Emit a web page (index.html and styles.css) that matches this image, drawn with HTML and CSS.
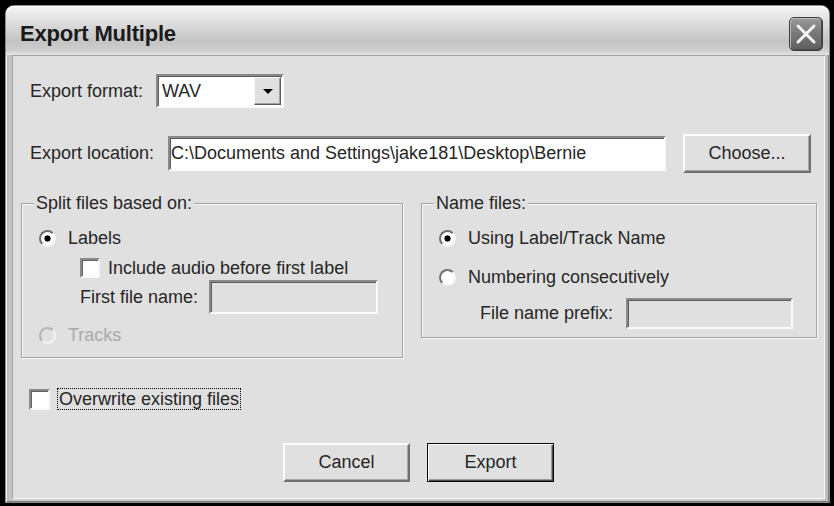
FILE: index.html
```html
<!DOCTYPE html>
<html lang="en">
<head>
  <meta charset="UTF-8">
  <meta name="viewport" content="width=device-width, initial-scale=1.0">
  <title>Export Multiple</title>
  <link rel="stylesheet" href="styles.css">
</head>
<body>
  <div class="window">
    <div class="titlebar">
      <span class="title">Export Multiple</span>
      <button class="close-btn" title="Close">
        <svg width="22" height="22" viewBox="0 0 22 22">
          <path d="M3 3 L19 19 M19 3 L3 19" stroke="#f4f4f4" stroke-width="3" stroke-linecap="round"/>
        </svg>
      </button>
    </div>

    <div class="content">
      <div class="row row-format">
        <label class="row-label format-label">Export format:</label>
        <div class="combo">
          <span class="combo-value">WAV</span>
          <span class="combo-btn"><span class="arrow"></span></span>
        </div>
      </div>

      <div class="row row-location">
        <label class="row-label location-label">Export location:</label>
        <input class="field location-field" type="text" value="C:\Documents and Settings\jake181\Desktop\Bernie">
        <button class="btn choose-btn">Choose...</button>
      </div>

      <div class="groups">
        <fieldset class="group split-group">
          <legend>Split files based on:</legend>
          <div class="opt opt-first">
            <input class="radio" type="radio" name="split" checked>
            <span>Labels</span>
          </div>
          <div class="opt opt-sub opt-check">
            <input class="check" type="checkbox">
            <span>Include audio before first label</span>
          </div>
          <div class="opt opt-sub opt-name">
            <span class="sub-label first-label">First file name:</span>
            <input class="field small-field first-field" type="text" disabled>
          </div>
          <div class="opt opt-tracks disabled">
            <input class="radio" type="radio" name="split" disabled>
            <span>Tracks</span>
          </div>
        </fieldset>

        <fieldset class="group name-group">
          <legend>Name files:</legend>
          <div class="opt opt-first">
            <input class="radio" type="radio" name="naming" checked>
            <span>Using Label/Track Name</span>
          </div>
          <div class="opt opt-numbering">
            <input class="radio" type="radio" name="naming">
            <span>Numbering consecutively</span>
          </div>
          <div class="opt opt-sub opt-prefix">
            <span class="sub-label prefix-label">File name prefix:</span>
            <input class="field small-field prefix-field" type="text" disabled>
          </div>
        </fieldset>
      </div>

      <div class="row row-overwrite">
        <input class="check" type="checkbox">
        <span class="focus-label">Overwrite existing files</span>
      </div>

      <div class="row row-buttons">
        <button class="btn">Cancel</button>
        <button class="btn btn-default">Export</button>
      </div>
    </div>
  </div>
</body>
</html>
```

FILE: styles.css
```css
body {
  margin: 0;
  background: #000;
  font-family: "Liberation Sans", Arial, sans-serif;
  font-size: 18px;
  color: #262626;
}

/* window frame */
.window {
  box-sizing: border-box;
  width: 825px;
  height: 498px;
  margin: 5px 4px 0 5px;
  padding: 0 4px 3px 6px;
  display: flex;
  flex-direction: column;
  background: linear-gradient(90deg, #b8b8b8, #cfcfcf 1%, #cfcfcf 99%, #b8b8b8);
  border: 1px solid #8e8e8e;
  border-radius: 9px 9px 0 0;
  box-shadow: inset 1px 0 #f2f2f2, inset -1px -1px #7a7a7a;
}

.titlebar {
  height: 49px;
  margin: 0 -4px 0 -6px;
  padding: 6px 6px 0 14px;
  box-sizing: border-box;
  display: flex;
  align-items: center;
  justify-content: space-between;
  border-radius: 8px 8px 0 0;
  background: linear-gradient(#f6f6f6 0%, #e6e6e6 22%, #d2d2d2 50%, #c4c4c4 72%, #cdcdcd 90%, #e4e4e4 100%);
  box-shadow: inset 0 1px #ffffff;
}

.title {
  font-size: 22px;
  font-weight: bold;
  color: #1a1a1a;
  line-height: 26px;
  letter-spacing: -0.2px;
}

.close-btn {
  width: 34px;
  height: 34px;
  padding: 0;
  display: flex;
  align-items: center;
  justify-content: center;
  border: 1px solid #3c3c3c;
  border-radius: 5px;
  background: linear-gradient(#9a9a9a, #7a7a7a 45%, #5e5e5e);
  box-shadow: inset 1px 1px #bdbdbd, inset -1px -1px #4a4a4a;
  cursor: pointer;
}

/* dialog body */
.content {
  flex: 1;
  display: flex;
  flex-direction: column;
  background: #e0e0e0;
  box-shadow: inset 1px 1px #a2a2a2, inset -1px -1px #f6f6f6;
}

.row {
  display: flex;
  align-items: center;
  padding-left: 18px;
}

.row-format {
  margin-top: 19px;
  height: 34px;
}

.format-label {
  width: 126px;
}

.location-label {
  width: 138px;
}

.combo {
  box-sizing: border-box;
  width: 128px;
  height: 34px;
  display: flex;
  align-items: center;
  padding: 1px 1px 1px 4px;
  background: #fff;
  border: 2px solid;
  border-color: #8a8a8a #fafafa #fafafa #8a8a8a;
  box-shadow: inset 1px 1px #5c5c5c;
}

.combo-value {
  flex: 1;
}

.combo-btn {
  box-sizing: border-box;
  width: 27px;
  height: 28px;
  display: flex;
  align-items: center;
  justify-content: center;
  background: #e0e0e0;
  border: 1px solid;
  border-color: #f8f8f8 #5a5a5a #5a5a5a #f8f8f8;
  box-shadow: inset -1px -1px #a0a0a0;
}

.arrow {
  width: 0;
  height: 0;
  border-left: 5px solid transparent;
  border-right: 5px solid transparent;
  border-top: 5px solid #000;
}

.field {
  box-sizing: border-box;
  margin: 0;
  padding: 0 0 0 1px;
  font-family: inherit;
  font-size: 18px;
  color: #262626;
  background: #fff;
  border: 2px solid;
  border-color: #8a8a8a #fafafa #fafafa #8a8a8a;
  box-shadow: inset 1px 1px #5c5c5c;
  outline: none;
}

.row-location {
  margin-top: 26px;
  height: 39px;
}

.location-field {
  width: 498px;
  height: 35px;
}

.btn {
  box-sizing: border-box;
  width: 127px;
  height: 39px;
  font-family: inherit;
  font-size: 18px;
  color: #262626;
  background: #e0e0e0;
  border: 2px solid;
  border-color: #fbfbfb #707070 #707070 #fbfbfb;
  box-shadow: inset -1px -1px #a6a6a6;
  cursor: pointer;
}

.choose-btn {
  width: 128px;
  margin-left: 17px;
}

.btn-default {
  border: 1px solid #0a0a0a;
  box-shadow: inset 1px 1px #fbfbfb, inset -1px -1px #4a4a4a, inset -2px -2px #9a9a9a;
}

/* group boxes */
.groups {
  display: flex;
  align-items: flex-start;
  gap: 18px;
  margin-top: 20px;
  padding-left: 9px;
}

.group {
  box-sizing: border-box;
  min-width: 0;
  margin: 0;
  padding: 0 0 10px 17px;
  border: 1px solid #a2a2a2;
  box-shadow: inset 1px 1px #fafafa, 1px 1px #fafafa;
}

.group legend {
  margin-left: -5px;
  padding: 0 2px;
  line-height: 20px;
  background: #e0e0e0;
}

.split-group {
  width: 382px;
}

.name-group {
  width: 396px;
  padding-bottom: 8px;
}

.opt {
  display: flex;
  align-items: center;
  height: 24px;
}

.opt-first {
  margin-top: 13px;
}

.opt-sub {
  padding-left: 41px;
}

.opt-check {
  margin-top: 6px;
}

.opt-name {
  height: 34px;
}

.opt-tracks {
  margin-top: 9px;
}

.opt-numbering {
  margin-top: 15px;
}

.opt-prefix {
  margin-top: 8px;
  height: 32px;
}

.first-label {
  width: 129px;
}

.prefix-label {
  width: 146px;
}

.small-field {
  background: #e0e0e0;
}

.first-field {
  width: 169px;
  height: 34px;
}

.prefix-field {
  width: 167px;
  height: 31px;
}

.disabled {
  color: #a9a9a9;
}

/* radios and checkboxes */
.radio {
  appearance: none;
  box-sizing: border-box;
  width: 17px;
  height: 17px;
  margin: 0 12px 0 0;
  border-radius: 50%;
  border: 2px solid;
  border-color: #707070 #f8f8f8 #f8f8f8 #707070;
  background: #fff;
}

.radio:checked {
  background: radial-gradient(circle, #000 2.8px, #fff 3.4px);
}

.radio:disabled {
  background: #e0e0e0;
  border-color: #b4b4b4 #f4f4f4 #f4f4f4 #b4b4b4;
}

.check {
  appearance: none;
  box-sizing: border-box;
  width: 20px;
  height: 20px;
  margin: 0 8px 0 0;
  border: 2px solid;
  border-color: #8a8a8a #f8f8f8 #f8f8f8 #8a8a8a;
  box-shadow: inset 1px 1px #606060;
  background: #fff;
}

.row-overwrite {
  margin-top: 29px;
  height: 24px;
  padding-left: 17px;
}

.row-overwrite .check {
  width: 21px;
  height: 21px;
  margin-right: 7px;
}

.focus-label {
  padding: 0 1px;
  line-height: 20px;
  border: 1px dotted #000;
}

.row-buttons {
  margin-top: 32px;
  padding-left: 0;
  justify-content: center;
  gap: 17px;
}
```
